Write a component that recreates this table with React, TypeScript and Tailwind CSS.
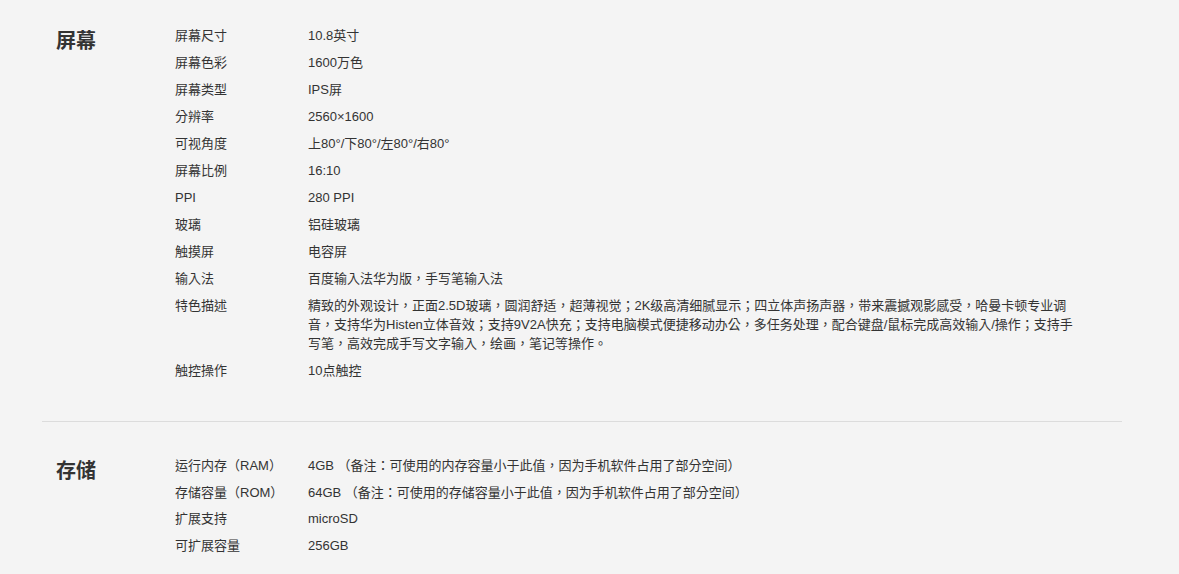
const font = { fontFamily: '"Liberation Sans", "Noto Sans CJK TC", sans-serif' };

type Row = [string, string];

const screen: Row[] = [
  ['屏幕尺寸', '10.8英寸'],
  ['屏幕色彩', '1600万色'],
  ['屏幕类型', 'IPS屏'],
  ['分辨率', '2560×1600'],
  ['可视角度', '上80°/下80°/左80°/右80°'],
  ['屏幕比例', '16:10'],
  ['PPI', '280 PPI'],
  ['玻璃', '铝硅玻璃'],
  ['触摸屏', '电容屏'],
  ['输入法', '百度输入法华为版，手写笔输入法'],
  [
    '特色描述',
    '精致的外观设计，正面2.5D玻璃，圆润舒适，超薄视觉；2K级高清细腻显示；四立体声扬声器，带来震撼观影感受，哈曼卡顿专业调音，支持华为Histen立体音效；支持9V2A快充；支持电脑模式便捷移动办公，多任务处理，配合键盘/鼠标完成高效输入/操作；支持手写笔，高效完成手写文字输入，绘画，笔记等操作。',
  ],
  ['触控操作', '10点触控'],
];

const storage: Row[] = [
  ['运行内存（RAM）', '4GB （备注：可使用的内存容量小于此值，因为手机软件占用了部分空间）'],
  ['存储容量（ROM）', '64GB （备注：可使用的存储容量小于此值，因为手机软件占用了部分空间）'],
  ['扩展支持', 'microSD'],
  ['可扩展容量', '256GB'],
];

function Section({ title, rows, last }: { title: string; rows: Row[]; last?: boolean }) {
  return (
    <div className={`flex ${last ? 'pt-[34px]' : 'pt-[26px] pb-[41px] border-b border-[#dcdcdc]'}`}>
      <div className="w-[133px] shrink-0 pl-[14px] pt-[1px] text-[20px] leading-[28px] font-bold text-[#333]">
        {title}
      </div>
      <div className={`flex flex-col ${last ? 'gap-[7.7px]' : 'gap-[8px]'}`}>
        {rows.map(([k, v]) => (
          <div key={k} className="flex text-[13px] leading-[19px] text-[#333]">
            <div className="w-[133px] shrink-0">{k}</div>
            <div className="w-[770px]">{v}</div>
          </div>
        ))}
      </div>
    </div>
  );
}

export default function App() {
  return (
    <div className="min-h-[574px] bg-[#f4f4f4]" style={font}>
      <div className="ml-[42px] w-[1080px]">
        <Section title="屏幕" rows={screen} />
        <Section title="存储" rows={storage} last />
      </div>
    </div>
  );
}
